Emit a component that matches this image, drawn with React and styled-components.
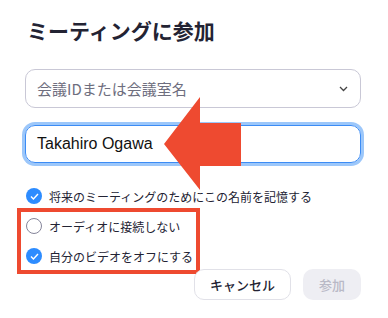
import React from 'react'
import styled, { createGlobalStyle } from 'styled-components'

const Global = createGlobalStyle`
  html, body { margin: 0; padding: 0; background: #fff; }
  body { font-family: "Noto Sans CJK JP", "Liberation Sans", sans-serif; }
`

const Dialog = styled.div`
  position: relative;
  width: 388px;
  height: 318px;
  box-sizing: border-box;
  padding: 16px 27px 0 25px;
  background: #fff;
  display: flex;
  flex-direction: column;
`

const Title = styled.h1`
  margin: 0 0 0 2px;
  font-size: 21px;
  line-height: 28px;
  font-weight: 700;
  color: #232333;
`

const Select = styled.div`
  margin-top: 25px;
  height: 39px;
  box-sizing: border-box;
  border: 1px solid #c9c8d6;
  border-radius: 10px;
  display: flex;
  align-items: center;
  justify-content: space-between;
  padding: 0 12px 0 11px;
  font-size: 15px;
  color: #6e6e7e;
`

const NameInput = styled.div`
  margin-top: 17px;
  height: 38px;
  box-sizing: border-box;
  border: 1px solid #3c8cf5;
  box-shadow: 0 0 0 3px #9cc7fa;
  border-radius: 10px;
  display: flex;
  align-items: center;
  padding-left: 11px;
  font-family: "Liberation Sans", sans-serif;
  font-size: 16px;
  color: #111;
`

const Row = styled.label`
  display: flex;
  align-items: center;
  gap: 7px;
  height: 20px;
  margin-top: ${p => p.$top || 0}px;
  margin-left: 1px;
  font-size: 12px;
  color: #232333;
`

const Box = styled.span`
  width: 16px;
  height: 16px;
  box-sizing: border-box;
  border-radius: 50%;
  flex: none;
  display: flex;
  align-items: center;
  justify-content: center;
  background: ${p => (p.$checked ? '#2d8cff' : '#fff')};
  border: ${p => (p.$checked ? 'none' : '1.2px solid #85859a')};
`

const Highlight = styled.div`
  margin: 2px 0 0 -8px;
  width: 183px;
  box-sizing: border-box;
  border: 4px solid #ee4a30;
  padding: 4px 0 4px 4px;
  display: flex;
  flex-direction: column;
  gap: 10px;
`

const Buttons = styled.div`
  margin-top: -5px;
  display: flex;
  justify-content: flex-end;
  gap: 12px;
`

const Button = styled.button`
  height: 31px;
  width: ${p => p.$w}px;
  border-radius: 10px;
  font-family: inherit;
  font-size: 13px;
  font-weight: 500;
  padding: 0;
  border: ${p => (p.$disabled ? 'none' : '1px solid #e1e1e8')};
  background: ${p => (p.$disabled ? '#eeeef3' : '#fff')};
  color: ${p => (p.$disabled ? '#b9b9c6' : '#232333')};
`

const Arrow = styled.svg`
  position: absolute;
  left: 164px;
  top: 97px;
`

const Check = ({ checked, children, top }) => (
  <Row $top={top}>
    <Box $checked={checked}>
      {checked && (
        <svg width="9" height="7" viewBox="0 0 9 7">
          <path d="M1 3.6 L3.4 6 L8 1" fill="none" stroke="#fff" strokeWidth="1.4" />
        </svg>
      )}
    </Box>
    {children}
  </Row>
)

export default function App() {
  return (
    <Dialog>
      <Global />
      <Title>ミーティングに参加</Title>
      <Select>
        会議IDまたは会議室名
        <svg width="9" height="6" viewBox="0 0 9 6">
          <path d="M1 1 L4.5 4.5 L8 1" fill="none" stroke="#444" strokeWidth="1.3" />
        </svg>
      </Select>
      <NameInput>Takahiro Ogawa</NameInput>
      <Check checked top={23}>将来のミーティングのためにこの名前を記憶する</Check>
      <Highlight>
        <Check>オーディオに接続しない</Check>
        <Check checked>自分のビデオをオフにする</Check>
      </Highlight>
      <Buttons>
        <Button $w={97}>キャンセル</Button>
        <Button $w={58} $disabled>参加</Button>
      </Buttons>
      <Arrow width="77" height="93" viewBox="0 0 77 93">
        <polygon points="0,47 36,0 36,26 77,26 77,69 36,69 36,93" fill="#ee4a30" />
      </Arrow>
    </Dialog>
  )
}
